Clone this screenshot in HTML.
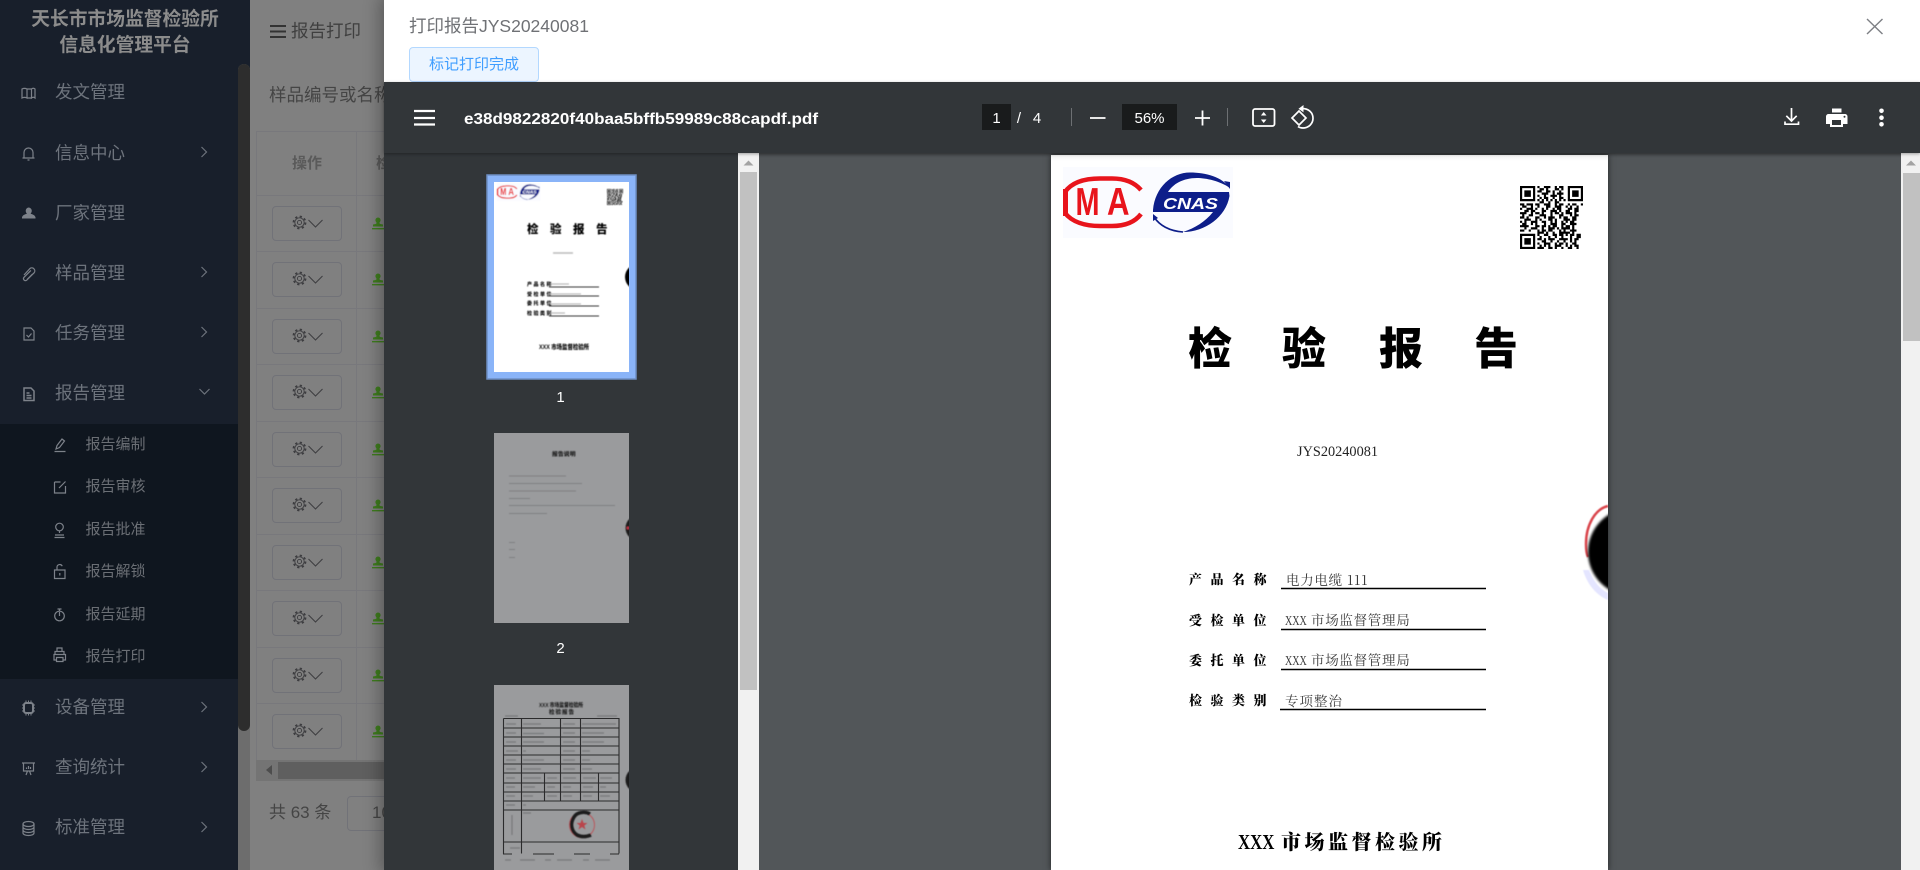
<!DOCTYPE html>
<html lang="zh-CN"><head><meta charset="utf-8"><title>打印报告</title>
<style>
*{box-sizing:border-box}
html,body{margin:0;padding:0;width:1920px;height:870px;overflow:hidden;background:#808080}
body{font-family:"Liberation Sans","Noto Sans CJK SC",sans-serif;position:relative}
div,span{position:absolute}
.m{left:55px;font-size:17.5px;line-height:24px;color:#6d737c;white-space:nowrap}
.s{left:85.5px;font-size:15px;line-height:22px;color:#6b6f75;white-space:nowrap}
.b{left:272px;width:70px;height:35px;border:1px solid #717278;border-radius:4px}
.hl{left:256px;width:128px;height:1px;background:#78787c}
</style></head><body>
<svg width="0" height="0" style="position:absolute"><defs>
<symbol id="qr" viewBox="0 0 29 29"><path fill="#000" fill-rule="evenodd" d="M0 0h7v7H0zM1 1v5h5V1zM2 2h3v3H2zM22 0h7v7h-7zM23 1v5h5V1zM24 2h3v3h-3zM0 22h7v7H0zM1 23v5h5v-5zM2 24h3v3H2z"/>
<path stroke="#000" stroke-width="1" fill="none" d="M8 .5h1m2 0h3m2 0h1m1 0h2M9 1.5h2m1 0h1m3 0h2m1 0h1M8 2.5h2m2 0h2m1 0h1m2 0h1M10 3.5h3m2 0h1m1 0h3M8 4.5h1m2 0h1m2 0h3m1 0h1M9 5.5h1m1 0h2m2 0h1m2 0h2M8 6.5h1m1 0h1m1 0h1m1 0h1m1 0h1m1 0h1m1 0h1M9 7.5h2m2 0h1m2 0h2M0 8.5h2m1 0h3m1 0h2m2 0h3m2 0h1m1 0h2m2 0h1m1 0h2m2 0h1M1 9.5h2m2 0h1m2 0h1m3 0h2m2 0h3m2 0h1m1 0h1m2 0h1M0 10.5h1m2 0h3m1 0h1m2 0h1m1 0h1m2 0h1m1 0h2m3 0h2m1 0h2M2 11.5h2m1 0h2m3 0h2m2 0h3m1 0h1m2 0h2m2 0h2M0 12.5h3m2 0h1m1 0h2m1 0h1m3 0h1m1 0h2m1 0h1m1 0h3m1 0h1M1 13.5h1m2 0h2m3 0h3m2 0h1m3 0h2m3 0h1m1 0h2M0 14.5h2m1 0h1m3 0h2m2 0h1m1 0h3m2 0h1m1 0h2m2 0h2M2 15.5h3m2 0h1m1 0h1m3 0h2m1 0h1m3 0h3m1 0h2M0 16.5h1m1 0h1m2 0h3m2 0h2m2 0h1m1 0h1m2 0h1m1 0h1m1 0h2M1 17.5h2m2 0h1m1 0h1m3 0h1m2 0h3m2 0h2m2 0h3M0 18.5h4m3 0h2m1 0h2m1 0h1m1 0h2m2 0h1m1 0h2m1 0h1M2 19.5h1m2 0h3m2 0h1m2 0h3m1 0h1m1 0h4m1 0h1M0 20.5h2m2 0h1m3 0h1m1 0h2m1 0h2m3 0h1m1 0h1m2 0h3M8 21.5h3m1 0h1m2 0h1m2 0h5m1 0h1M8 22.5h1m2 0h2m2 0h2m1 0h2m1 0h1m1 0h2m1 0h2M9 23.5h1m3 0h1m2 0h1m2 0h1m3 0h1m2 0h2M8 24.5h2m1 0h1m1 0h3m2 0h4m1 0h1m1 0h2M10 25.5h2m2 0h1m2 0h1m2 0h1m2 0h1m1 0h1M8 26.5h1m2 0h3m2 0h1m1 0h2m1 0h1m2 0h2M9 27.5h1m1 0h1m1 0h1m2 0h3m2 0h1m1 0h1m1 0h2M8 28.5h3m2 0h2m1 0h1m2 0h1m2 0h2m2 0h1"/></symbol>
<symbol id="gear" viewBox="0 0 16 16"><circle cx="8" cy="8" r="5" fill="none" stroke="#3d3d40" stroke-width="1"/><circle cx="8" cy="8" r="6.4" fill="none" stroke="#3d3d40" stroke-width="1.9" stroke-dasharray="2.4 2.63"/><circle cx="8" cy="8" r="2.2" fill="none" stroke="#3d3d40" stroke-width="1"/></symbol>
<symbol id="stamp" viewBox="0 0 12 13"><path fill="#3f7d1e" d="M6 .5a2.6 2.6 0 0 1 2.6 2.6c0 1.2-.8 1.8-1.2 2.7 0 .7.3 1 1 1.2l2.6.5V9.500H1V7.500l2.600-.5c.7-.2 1-.5 1-1.200C4.200 4.900 3.400 4.300 3.400 3.100A2.600 2.600 0 0 1 6 .5zM0 11h12v1.400H0z"/></symbol>
<symbol id="cr" viewBox="0 0 8 12"><path d="M1.500 1l5 5-5 5" fill="none" stroke="#6d737c" stroke-width="1.200"/></symbol>
</defs></svg>

<!-- main background -->
<div style="left:250px;top:0;width:140px;height:870px;background:#808080"></div>
<svg style="position:absolute;left:270px;top:24px" width="17" height="15"><path d="M0 2h16M0 7.500h16M0 13h16" stroke="#333" stroke-width="2"/></svg>
<div style="left:291px;top:19px;font-size:17.500px;line-height:24px;color:#3f3f3f;white-space:nowrap">报告打印</div>
<div style="left:269px;top:83px;font-size:17.500px;line-height:24px;color:#454545;white-space:nowrap">样品编号或名称</div>
<div style="left:256px;top:131px;width:128px;height:629px;border-left:1px solid #78787c"></div>
<div style="left:356px;top:131px;width:1px;height:629px;background:#78787c"></div>
<div class="hl" style="top:131px"></div><div class="hl" style="top:195px"></div><div class="hl" style="top:251px"></div><div class="hl" style="top:308px"></div><div class="hl" style="top:364px"></div><div class="hl" style="top:421px"></div><div class="hl" style="top:477px"></div><div class="hl" style="top:534px"></div><div class="hl" style="top:590px"></div><div class="hl" style="top:647px"></div><div class="hl" style="top:703px"></div>
<div style="left:292px;top:154px;font-size:15px;font-weight:700;line-height:20px;color:#5a5a5a;white-space:nowrap">操作</div>
<div style="left:376px;top:154px;width:8px;overflow:hidden;font-size:15px;font-weight:700;line-height:20px;color:#5a5a5a;white-space:nowrap">检</div>
<div class="b" style="top:206px"></div><div class="b" style="top:262px"></div><div class="b" style="top:319px"></div><div class="b" style="top:375px"></div><div class="b" style="top:432px"></div><div class="b" style="top:488px"></div><div class="b" style="top:545px"></div><div class="b" style="top:601px"></div><div class="b" style="top:658px"></div><div class="b" style="top:714px"></div>
<svg style="position:absolute;left:288px;top:200px" width="96" height="550" fill="none">
<g id="r0"><use href="#gear" x="4" y="15" width="15" height="15"/><path d="M20.500 20l7 7 7-7" stroke="#3d3d40" stroke-width="1"/><use href="#stamp" x="84" y="17" width="12" height="13"/></g>
<use href="#r0" y="56"/><use href="#r0" y="113"/><use href="#r0" y="169"/><use href="#r0" y="226"/><use href="#r0" y="282"/><use href="#r0" y="339"/><use href="#r0" y="395"/><use href="#r0" y="452"/><use href="#r0" y="508"/>
</svg>
<div style="left:256px;top:760px;width:128px;height:21px;background:#747474"></div>
<div style="left:278px;top:762px;width:106px;height:17px;background:#5f5f5f"></div>
<svg style="position:absolute;left:264px;top:764px" width="10" height="12"><path d="M8 1v10L2 6z" fill="#4d4d4d"/></svg>
<div style="left:269px;top:801px;font-size:17px;line-height:24px;color:#454545;white-space:nowrap">共 63 条</div>
<div style="left:347px;top:796px;width:50px;height:35px;border:1px solid #717278;border-radius:4px"></div>
<div style="left:372px;top:801px;font-size:17px;line-height:24px;color:#454545">10</div>

<!-- sidebar -->
<div style="left:0;top:0;width:250px;height:870px;background:#181f2b"></div>
<div style="left:238px;top:64px;width:12px;height:806px;background:#6d6d6d;border-radius:6px 6px 0 0"></div>
<div style="left:238px;top:64px;width:12px;height:667px;background:#2d2d2d;border-radius:6px"></div>
<div style="left:0;top:424px;width:238px;height:255px;background:#0f161f"></div>
<div style="left:0;top:6px;width:250px;text-align:center;font-size:18.750px;line-height:26px;font-weight:700;color:#8c8c8c">天长市市场监督检验所<br>信息化管理平台</div>
<div class="m" style="top:80px">发文管理</div><div class="m" style="top:141px">信息中心</div><div class="m" style="top:201px">厂家管理</div><div class="m" style="top:261px">样品管理</div><div class="m" style="top:321px">任务管理</div><div class="m" style="top:381px">报告管理</div>
<div class="s" style="top:434px">报告编制</div><div class="s" style="top:476px">报告审核</div><div class="s" style="top:519px">报告批准</div><div class="s" style="top:561px">报告解锁</div><div class="s" style="top:604px">报告延期</div><div class="s" style="top:646px">报告打印</div>
<div class="m" style="top:695px">设备管理</div><div class="m" style="top:755px">查询统计</div><div class="m" style="top:815px">标准管理</div>
<svg style="position:absolute;left:0;top:0" width="238" height="870" fill="none" stroke="#7d828a" stroke-width="1.200">
<use href="#cr" x="200" y="146" width="8" height="12"/><use href="#cr" x="200" y="266" width="8" height="12"/><use href="#cr" x="200" y="326" width="8" height="12"/><use href="#cr" x="200" y="701" width="8" height="12"/><use href="#cr" x="200" y="761" width="8" height="12"/><use href="#cr" x="200" y="821" width="8" height="12"/>
<path d="M199.500 389l5 5 5-5" stroke="#6d737c" stroke-width="1.200"/>
<path d="M22 89c1.500-.8 3.500-.8 5 0v9c-1.500-.8-3.500-.8-5 0zM27 89h4.500v9H27zM31.500 89c1-.8 2.500-.8 3.500 0v9c-1-.8-2.500-.8-3.500 0z"/>
<path d="M24 158v-5.500a4.500 4.500 0 0 1 9 0V158zM22.500 158h12M27.500 160h2" />
<path fill="#7d828a" stroke="none" d="M28.500 207.500a3.300 3.300 0 0 1 3.300 3.300c0 1.300-.7 2.300-1.200 2.900 2.200.6 4.400 1.400 4.900 3.600v1.200H22v-1.200c.5-2.200 2.700-3 4.900-3.600-.5-.6-1.200-1.600-1.200-2.900a3.300 3.300 0 0 1 2.800-3.300z"/>
<path d="M24 275l6-6.500a3 3 0 0 1 4.200 4.200l-7.500 7.500a2 2 0 0 1-2.800-2.800l7-7M27 279.500l5.500-5.500"/>
<path d="M24 328h7l3 3v9H24zM26.500 335l2 2 3-3.500"/>
<path d="M24 388h7l3 3v9.500H24zM26.500 393h3M26.500 395.500h5M26.500 398h5" stroke-width="1.500"/>
<path d="M56 449l1-3.500 5-6.500 2.500 2-5 6.500zM54.500 451.500h11"/>
<path d="M54.500 482v11h11v-7M59 488l6.500-6.500M54.500 482h6"/>
<circle cx="59.500" cy="527" r="3.800"/><path d="M59.500 531v2M55 535h9M54.500 537.500h10"/>
<path d="M54.500 570h10.500v8.500H54.500zM57 570v-3a2.700 2.700 0 0 1 5.200-.8M59.800 573v2.500"/>
<circle cx="59.500" cy="616" r="4.800"/><path d="M59.500 612v4M57.500 609h4M59.500 609v2"/>
<path d="M55 654v-2.500h9v2.500M57 651.500v-3.500h5v3.500M56 660H54v-5.500h11.500V660h-2M56.500 657.500h6.500v4h-6.500z"/>
<rect x="24" y="703" width="9" height="10" rx="2" stroke-width="2"/><path d="M26 700.500v2M28.500 700.500v2M31 700.500v2M26 713.500v2M28.500 713.500v2M31 713.500v2M22 705h1.500M22 708h1.500M22 711h1.500M33.500 705h1.500M33.500 708h1.500M33.500 711h1.500" stroke-width="1"/>
<path d="M22 763h13M23.500 763v8h10v-8M26 775l1.500-4M31 775l-1.500-4M26.500 769v-1.500M28.500 769v-3M30.500 769v-2"/>
<ellipse cx="28.500" cy="824" rx="5.500" ry="2.500"/><path d="M23 824v9c0 1.500 2.500 2.500 5.500 2.500s5.500-1 5.500-2.500v-9M23 827c0 1.500 2.500 2.500 5.500 2.500s5.500-1 5.500-2.500M23 830c0 1.500 2.500 2.500 5.500 2.500s5.500-1 5.500-2.500"/>
</svg>

<!-- modal -->
<div style="left:384px;top:0;width:1536px;height:870px;background:#fff;box-shadow:0 0 16px 4px rgba(0,0,0,.3)"></div>
<div style="left:409px;top:14px;font-size:17.500px;line-height:24px;color:#6f7175;white-space:nowrap">打印报告JYS20240081</div>
<div style="left:409px;top:47px;width:130px;height:35px;background:#ecf5ff;border:1px solid #b3d8ff;border-radius:4px;color:#409eff;font-size:15px;line-height:33px;text-align:center">标记打印完成</div>
<svg style="position:absolute;left:1866px;top:18px" width="18" height="17"><path d="M1 1l15.500 15M16.500 1L1 16" stroke="#7d7f84" stroke-width="1.400" fill="none"/></svg>

<div style="left:384px;top:82px;width:1536px;height:788px;background:#323639"></div>
<div style="left:759px;top:153px;width:1142px;height:717px;background:#525659"></div>
<div style="left:1051px;top:155px;width:557px;height:715px;background:#fff;box-shadow:0 0 6px rgba(0,0,0,.6);overflow:hidden"></div>
<div style="left:759px;top:152px;width:1161px;height:6px;background:linear-gradient(rgba(0,0,0,.22),rgba(0,0,0,0))"></div>
<div style="left:1051px;top:155px;width:557px;height:6px;background:linear-gradient(#f0f0f0,#fff)"></div>
<div style="left:738px;top:153px;width:21px;height:717px;background:#f1f1f1"></div>
<div style="left:740px;top:172px;width:17px;height:518px;background:#c1c1c1"></div>
<div style="left:1901px;top:153px;width:19px;height:717px;background:#f1f1f1"></div>
<div style="left:1903px;top:173px;width:17px;height:168px;background:#c1c1c1"></div>
<div style="left:384px;top:82px;width:1536px;height:71px;background:#323639;box-shadow:0 1px 3px rgba(0,0,0,.35)"></div>

<svg style="position:absolute;left:0;top:0" width="1920" height="870" font-family="'Liberation Sans','Noto Sans CJK SC',sans-serif">
<defs><clipPath id="pg"><rect x="1051" y="155" width="557" height="715"/></clipPath><clipPath id="t1"><rect x="494" y="182" width="135" height="190"/></clipPath><clipPath id="t2"><rect x="494" y="433" width="135" height="190"/></clipPath><clipPath id="t3"><rect x="494" y="685" width="135" height="190"/></clipPath>
<filter id="bl" x="-10%" y="-10%" width="120%" height="120%"><feGaussianBlur stdDeviation=".45"/></filter>
<filter id="bl2" x="-30%" y="-30%" width="160%" height="160%"><feGaussianBlur stdDeviation="1.200"/></filter>
<g id="ma"><rect x="1063" y="167" width="170" height="71" fill="#fafbff"/>
<path d="M1065 192C1072 182 1085 178.500 1100 178.500H1112C1126 178.500 1135 183 1141 190M1065 213C1072 222 1085 226 1100 226H1112C1126 226 1135 222 1141 214" fill="none" stroke="#e8141c" stroke-width="4.500"/>
<path d="M1065.500 189v27" stroke="#e8141c" stroke-width="5"/>
<text transform="translate(1075.500 215) scale(.74 1)" font-size="39" font-weight="700" fill="#e8141c">M</text>
<text transform="translate(1107 215) scale(.8 1)" font-size="39" font-weight="700" fill="#e8141c">A</text>
<path d="M1153 210C1155 187 1172 172.500 1190 172.500C1206 172.500 1222 177 1230 188C1220 181 1206 178 1197 178C1183 178 1173 184 1168 192H1229L1229.500 196C1226 217 1205 232 1183 232C1195 228 1205 222 1213 212H1153z" fill="#0d1e8a"/>
<path d="M1154 217C1160 226 1170 231 1183 232" fill="none" stroke="#0d1e8a" stroke-width="1.600"/>
<path d="M1224 181l6 8 0-7zM1153 214l0 7 5-3z" fill="#0d1e8a"/>
<text x="1163" y="209" font-size="16" font-weight="700" font-style="italic" fill="#fff" textLength="55" lengthAdjust="spacingAndGlyphs">CNAS</text></g>
</defs>

<!-- toolbar -->
<path d="M414 111h21M414 118h21M414 124.500h21" stroke="#fff" stroke-width="2.200"/>
<text x="464" y="124" font-size="16" font-weight="700" fill="#fff" textLength="354" lengthAdjust="spacingAndGlyphs">e38d9822820f40baa5bffb59989c88capdf.pdf</text>
<rect x="982" y="104" width="29" height="26" fill="#191b1c"/><rect x="1122" y="104" width="55" height="26" fill="#191b1c"/>
<g fill="#fff" font-size="15"><text x="996.500" y="123" text-anchor="middle">1</text><text x="1019" y="123" text-anchor="middle">/</text><text x="1037" y="123" text-anchor="middle">4</text><text x="1149.500" y="123" text-anchor="middle">56%</text></g>
<path d="M1071.500 108v18M1227.500 108v18" stroke="#6d7073" stroke-width="1"/>
<path d="M1090 118h15.500M1195 118h15M1202.500 110.500v15" stroke="#fff" stroke-width="1.800"/>
<rect x="1253" y="109" width="21.500" height="17" rx="2" fill="none" stroke="#fff" stroke-width="1.800"/>
<path d="M1263.700 112l2.800 3.500h-5.600zM1263.700 123l2.800-3.500h-5.600z" fill="#fff"/>
<path d="M1299 111l7 7-7 7-7-7z" fill="none" stroke="#fff" stroke-width="1.700"/>
<path d="M1302 108.500c7 0 11 4.500 11 9.800 0 5.500-4.500 9.700-10 9.700-2 0-3.700-.5-5-1.500" fill="none" stroke="#fff" stroke-width="1.700"/>
<path d="M1303.500 105l-5 3.700 5 3.700z" fill="#fff"/>
<path d="M1791.500 108v13M1786.300 115.800l5.200 5.200 5.200-5.200M1785 121.500v2.700h13.500v-2.700" fill="none" stroke="#fff" stroke-width="1.700"/>
<path fill="#fff" d="M1832 108.500h9.500v4H1832zM1828.500 114h16.500a2.500 2.500 0 0 1 2.500 2.500v7.500h-4.500v3h-13v-3h-4v-7.500a2.500 2.500 0 0 1 2.500-2.500z"/><rect x="1832" y="120" width="9" height="5" fill="#323639"/><circle cx="1844.500" cy="116.800" r="1" fill="#323639"/>
<circle cx="1881.500" cy="110.800" r="2.300" fill="#fff"/><circle cx="1881.500" cy="117.700" r="2.300" fill="#fff"/><circle cx="1881.500" cy="124.300" r="2.300" fill="#fff"/>

<!-- scrollbar arrows -->
<path d="M748.500 160.500l-5 5h10zM1911 160.500l-5 5h10z" fill="#a3a3a3"/>

<!-- pdf page -->
<g clip-path="url(#pg)">
<use href="#ma"/>
<use href="#qr" x="1520" y="186" width="63" height="63"/>
<g font-size="44" font-weight="900" font-family="'Noto Sans CJK SC',sans-serif" fill="#000"><text x="1188" y="364">检</text><text x="1282" y="364">验</text><text x="1379" y="364">报</text><text x="1474" y="364">告</text></g>
<text x="1297" y="456" font-family="'Liberation Serif',serif" font-size="14.300" fill="#222">JYS20240081</text>
<g font-family="'Noto Serif CJK SC',serif" font-size="13" font-weight="900" fill="#000" letter-spacing="8.500"><text x="1189" y="584">产品名称</text><text x="1189" y="625">受检单位</text><text x="1189" y="665">委托单位</text><text x="1189" y="705">检验类别</text></g>
<g font-family="'Noto Serif CJK SC',serif" font-size="13.500" fill="#3a3a3a" letter-spacing=".7"><text x="1286" y="585">电力电缆 111</text>
<text transform="translate(1285 625) scale(.72 1)" font-family="'Liberation Serif',serif" font-size="14" letter-spacing="0">XXX</text><text x="1311" y="625">市场监督管理局</text>
<text transform="translate(1285 665) scale(.72 1)" font-family="'Liberation Serif',serif" font-size="14" letter-spacing="0">XXX</text><text x="1311" y="665">市场监督管理局</text>
<text x="1285" y="706" letter-spacing="1">专项整治</text></g>
<path d="M1281 588.500h205M1281 629.500h205M1281 669.500h205M1280 709.500h206" stroke="#000" stroke-width="1.500"/>
<text transform="translate(1238 849) scale(.8 1)" font-family="'Liberation Serif',serif" font-size="21" font-weight="700">XXX</text>
<text x="1281" y="849" font-family="'Noto Serif CJK SC',serif" font-size="20" font-weight="900" letter-spacing="3.500">市场监督检验所</text>
<path d="M1608 506c-13 3-22 19-22 38 0 6 .5 10 2 13" fill="none" stroke="#d9454c" stroke-width="2.500" filter="url(#bl)"/>
<circle cx="1632" cy="552" r="44" fill="#000" filter="url(#bl2)"/>
<path d="M1583 570c4 14 13 25 25 30v-7c-8-4-14-11-19-23z" fill="#e4e5ff" filter="url(#bl)"/>
</g>

<!-- thumb 1 -->
<rect x="487" y="175" width="149" height="204" fill="#8ab4f8" stroke="#6e8fc4" stroke-width="1.500"/>
<rect x="494" y="182" width="135" height="190" fill="#fff"/>
<g clip-path="url(#t1)"><g filter="url(#bl)">
<use href="#ma" transform="translate(497 183) scale(.255) translate(-1063 -167)"/>
<use href="#qr" x="607" y="189" width="16" height="16"/>
<g font-size="11.500" font-weight="900" font-family="'Noto Sans CJK SC',sans-serif"><text x="527" y="233">检</text><text x="550" y="233">验</text><text x="573" y="233">报</text><text x="596" y="233">告</text></g>
<path d="M553 253h20" stroke="#bbb" stroke-width="1.500"/>
<g font-size="5" font-weight="900" letter-spacing="1.500"><text x="527" y="286">产品名称</text><text x="527" y="296">受检单位</text><text x="527" y="305">委托单位</text><text x="527" y="315">检验类别</text></g>
<path d="M551 284h18M551 294h30M551 304h30M551 313h14" stroke="#bbb" stroke-width="1.300"/>
<path d="M549 287h50M549 296h50M549 306h50M549 316h50" stroke="#333" stroke-width="1"/>
<text x="539" y="349" font-size="6.500" font-weight="900" textLength="50" lengthAdjust="spacingAndGlyphs">XXX 市场监督检验所</text>
<circle cx="638" cy="277" r="13" fill="#000"/></g></g>
<text x="560.500" y="402" text-anchor="middle" fill="#fff" font-size="15">1</text>

<!-- thumb 2 -->
<rect x="494" y="433" width="135" height="190" fill="#9a9b9d"/>
<g clip-path="url(#t2)"><g filter="url(#bl)">
<text x="552" y="456" font-size="5.800" font-weight="900" fill="#1a1a1a" letter-spacing=".1">报告说明</text>
<path d="M509 476h57M509 483.500h73M509 491h67M509 498.500h21M509 505.500h106M509 513.500h38M509 542.500h6M509 549.500h6M509 557.500h6" stroke="#7f8082" stroke-width="1.100"/>
<circle cx="638" cy="528" r="12.500" fill="#1b1b1d"/><circle cx="636" cy="528" r="5" fill="#98a"/><circle cx="628" cy="528" r="1.500" fill="#b34"/>
</g></g>
<text x="560.500" y="653" text-anchor="middle" fill="#fff" font-size="15">2</text>

<!-- thumb 3 -->
<rect x="494" y="685" width="135" height="190" fill="#9a9b9d"/>
<g clip-path="url(#t3)">
<g filter="url(#bl)"><text x="539" y="707" font-size="5.800" font-weight="900" fill="#1a1a1a" textLength="44" lengthAdjust="spacingAndGlyphs">XXX 市场监督检验所</text><text x="549" y="714" font-size="5.500" font-weight="900" fill="#1a1a1a" letter-spacing="1">检验报告</text>
<path d="M505 716h13M597 716h20M523 724h18M523 733.500h21M523 742h21M523 751h3M523 760h21M523 769h18M523 778h18M523 787h12M523 796h10M523 805h3M523 813h8M506 724h10M506 733h10M506 742h10M506 751h12M506 760h10M506 769h10M506 778h9M506 787h9M506 796h9M506 805h9M563 724h12M563 733h12M563 742h12M563 751h12M563 760h12M563 769h12M582 724h34M582 733h22M582 742h22M582 751h8M582 760h8M582 769h10M547 778h10M547 787h8M547 796h10M563 778h13M563 787h8M563 796h9M583 778h13M583 787h10M583 796h9M600 778h12M600 787h6M600 796h10M512 815v20M510 848h10M505 860h6M545 860h6M583 860h6M520 860h15M557 860h15M595 860h15" stroke="#77787a" stroke-width="1.200"/></g>
<path d="M503.500 718.500h115.500v135M503.500 718.500v135.500M503 854h9M533 854h21M574 854h16M610 854h9M521.500 718.500v135M560.500 718.500v55M560.500 773.500v28M580.500 718.500v83M544.500 773.500v28M598.500 773.500v28M503.500 728h115M503.500 737h115M503.500 746h115M503.500 755h115M503.500 764h115M503.500 773h115M503.500 783h115M503.500 792h115M503.500 801h115M503.500 810h115M503.500 842h115" fill="none" stroke="#2b2b2c" stroke-width="1.100"/>
<g filter="url(#bl)"><circle cx="582" cy="825" r="12.500" fill="none" stroke="#b9565c" stroke-width="1"/>
<path d="M590 814c-5-3-13-2-16 3-4 6-3 14 3 18 4 2 9 2 14 0" fill="none" stroke="#1b1b1d" stroke-width="3.500"/><path d="M582 819l1.500 4h4l-3.200 2.500 1.200 4-3.500-2.500-3.500 2.500 1.200-4-3.200-2.500h4z" fill="#b9454c"/><circle cx="638" cy="780" r="12.500" fill="#1b1b1d"/><circle cx="635" cy="780" r="4" fill="#a44"/></g>
</g>
</svg>
</body></html>
